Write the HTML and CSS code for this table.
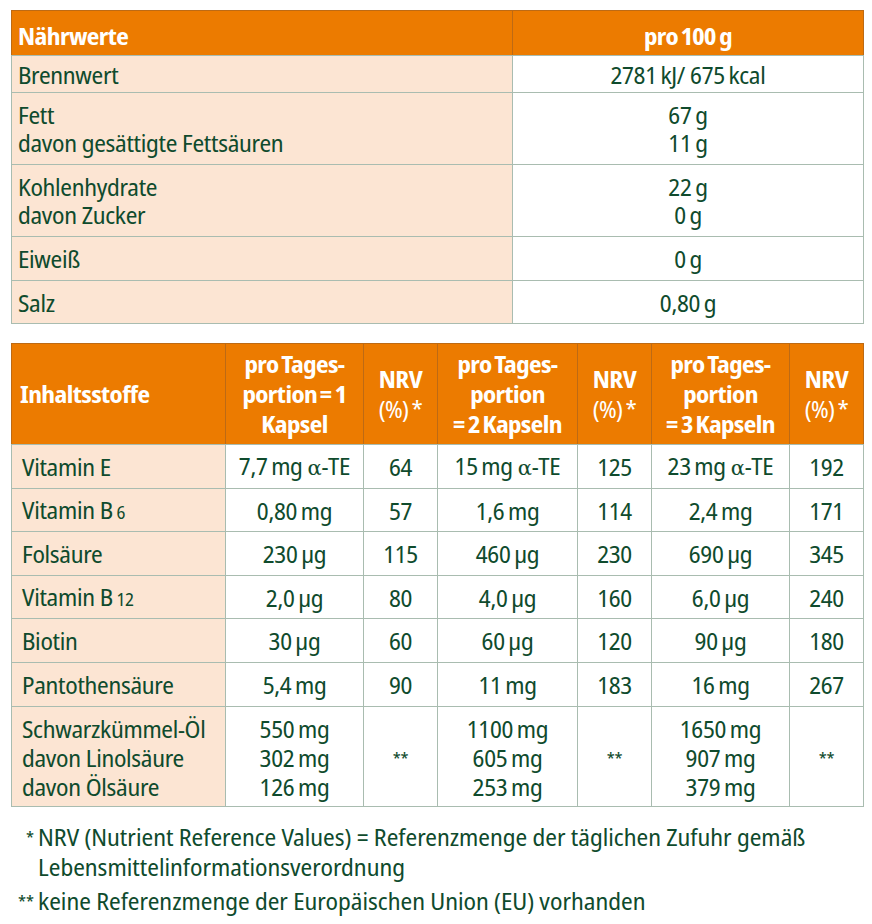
FILE: index.html
```html
<!DOCTYPE html>
<html lang="de">
<head>
<meta charset="utf-8">
<title>Nährwerte</title>
<link rel="stylesheet" href="styles.css">
</head>
<body>
<div class="page">
  <table class="tbl nutri">
    <colgroup><col class="c-name"><col class="c-val"></colgroup>
    <thead>
      <tr class="h45"><th class="left">Nährwerte</th><th>pro 100&#8201;g</th></tr>
    </thead>
    <tbody>
      <tr class="h37"><td class="name">Brennwert</td><td>2781&#8201;kJ/ 675&#8201;kcal</td></tr>
      <tr class="h72"><td class="name">Fett<br>davon gesättigte Fettsäuren</td><td>67&#8201;g<br>11&#8201;g</td></tr>
      <tr class="h72"><td class="name">Kohlenhydrate<br>davon Zucker</td><td>22&#8201;g<br>0&#8201;g</td></tr>
      <tr class="h44"><td class="name">Eiweiß</td><td>0&#8201;g</td></tr>
      <tr class="h43"><td class="name">Salz</td><td>0,80&#8201;g</td></tr>
    </tbody>
  </table>

  <table class="tbl ingr">
    <colgroup>
      <col class="k1"><col class="k2"><col class="k3"><col class="k4"><col class="k3"><col class="k2"><col class="k3">
    </colgroup>
    <thead>
      <tr class="h101">
        <th class="left">Inhaltsstoffe</th>
        <th>pro Tages-<br>portion =&#8201;1<br>Kapsel</th>
        <th>NRV<br><span class="pct">(%)&#8201;*</span></th>
        <th>pro Tages-<br>portion<br>=&#8201;2 Kapseln</th>
        <th>NRV<br><span class="pct">(%)&#8201;*</span></th>
        <th>pro Tages-<br>portion<br>=&#8201;3 Kapseln</th>
        <th>NRV<br><span class="pct">(%)&#8201;*</span></th>
      </tr>
    </thead>
    <tbody>
      <tr class="h44"><td class="name">Vitamin E</td><td>7,7&#8201;mg <span class="alpha">α</span>-TE</td><td>64</td><td>15&#8201;mg <span class="alpha">α</span>-TE</td><td>125</td><td>23&#8201;mg <span class="alpha">α</span>-TE</td><td>192</td></tr>
      <tr class="h43"><td class="name">Vitamin B&#8201;<span class="sub">6</span></td><td>0,80&#8201;mg</td><td>57</td><td>1,6&#8201;mg</td><td>114</td><td>2,4&#8201;mg</td><td>171</td></tr>
      <tr class="h44"><td class="name">Folsäure</td><td>230&#8201;µg</td><td>115</td><td>460&#8201;µg</td><td>230</td><td>690&#8201;µg</td><td>345</td></tr>
      <tr class="h43"><td class="name">Vitamin B&#8201;<span class="sub">12</span></td><td>2,0&#8201;µg</td><td>80</td><td>4,0&#8201;µg</td><td>160</td><td>6,0&#8201;µg</td><td>240</td></tr>
      <tr class="h44"><td class="name">Biotin</td><td>30&#8201;µg</td><td>60</td><td>60&#8201;µg</td><td>120</td><td>90&#8201;µg</td><td>180</td></tr>
      <tr class="h44"><td class="name">Pantothensäure</td><td>5,4&#8201;mg</td><td>90</td><td>11&#8201;mg</td><td>183</td><td>16&#8201;mg</td><td>267</td></tr>
      <tr class="h100 multi"><td class="name">Schwarzkümmel-Öl<br>davon Linolsäure<br>davon Ölsäure</td><td>550&#8201;mg<br>302&#8201;mg<br>126&#8201;mg</td><td class="star">**</td><td>1100&#8201;mg<br>605&#8201;mg<br>253&#8201;mg</td><td class="star">**</td><td>1650&#8201;mg<br>907&#8201;mg<br>379&#8201;mg</td><td class="star">**</td></tr>
    </tbody>
  </table>

  <div class="notes">
    <div class="note"><span class="mark">*</span><span class="ntext">NRV (Nutrient Reference Values) = Referenzmenge der täglichen Zufuhr gemäß<br>Lebensmittelinformationsverordnung</span></div>
    <div class="note"><span class="mark">**</span><span class="ntext">keine Referenzmenge der Europäischen Union (EU) vorhanden</span></div>
  </div>
</div>
</body>
</html>
```
FILE: styles.css
```css
html, body {
  margin: 0;
  padding: 0;
  background: #ffffff;
}

.page {
  padding: 10px 9px 0 11px;
  font-family: "Noto Sans Display", "Open Sans", sans-serif;
  font-stretch: 87.5%;
  font-size: 24px;
  color: #0f4b2d;
}

.tbl {
  width: 852px;
  border-collapse: collapse;
  table-layout: fixed;
  border: 1px solid #6f8f7b;
}

.tbl th,
.tbl td {
  border: 1px solid #a9bcb0;
  padding: 0 6px;
  text-align: center;
  vertical-align: middle;
  line-height: 28px;
}

.tbl td {
  letter-spacing: -0.3px;
  padding-top: 1px;
}

.tbl th {
  background: #ec7b00;
  color: #ffffff;
  font-weight: 700;
  letter-spacing: -0.6px;
  word-spacing: -2px;
  border-color: #bd6a14;
  border-bottom-color: #a9bcb0;
}

.tbl th.left {
  text-align: left;
  padding-left: 8px;
}

.tbl td.name {
  text-align: left;
  background: #fce5d3;
  padding-left: 6px;
}

.nutri .c-name { width: 501px; }
.nutri .c-val { width: 351px; }

.nutri {
  border-top-color: #9fb4a6;
}

.nutri th {
  padding-top: 5px;
}

.nutri th.left {
  padding-left: 6px;
}

.ingr {
  margin-top: 19px;
  border-color: #3f6b52;
}

.ingr th {
  line-height: 30px;
}

.ingr td.name {
  padding-left: 10px;
}

.ingr .k1 { width: 214px; }
.ingr .k2 { width: 138px; }
.ingr .k3 { width: 74px; }
.ingr .k4 { width: 140px; }

.ingr .pct {
  font-weight: 400;
}

.ingr .multi td {
  line-height: 29px;
}

.ingr td.star {
  font-size: 17px;
}

.sub {
  font-size: 18px;
}

.alpha {
  font-family: "DejaVu Serif", serif;
  font-stretch: 100%;
  font-size: 21px;
}

.h45 { height: 45px; }
.h37 { height: 37px; }
.h72 { height: 72px; }
.h44 { height: 44px; }
.h43 { height: 43px; }
.h101 { height: 101px; }
.h100 { height: 100px; }

.notes {
  margin-top: 15px;
}

.note {
  display: flex;
  line-height: 30px;
  margin-bottom: 4px;
}

.mark {
  width: 27px;
  flex: none;
  text-align: right;
  padding-right: 4px;
  box-sizing: border-box;
  font-size: 17px;
}

.ntext {
  flex: 1;
}
```
